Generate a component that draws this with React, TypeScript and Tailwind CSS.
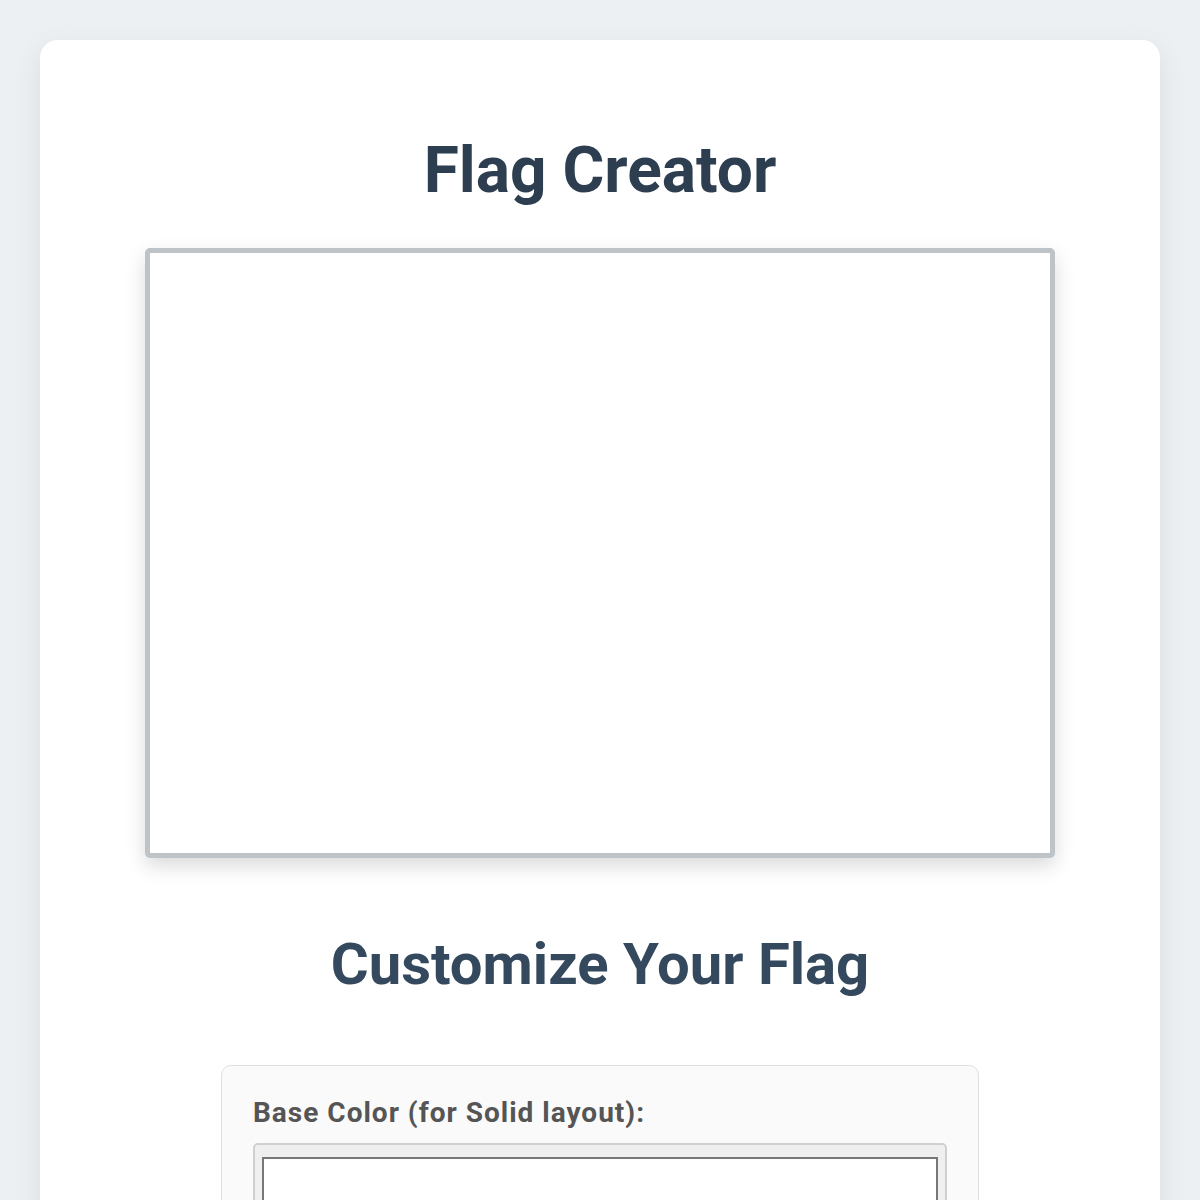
export default function App() {
  return (
    <div className="min-h-screen bg-[#ecf0f3] p-[40px] font-['Roboto',sans-serif]">
      <div className="flex flex-col items-center rounded-[18px] bg-white px-[40px] pt-[93px] pb-[60px] shadow-[0_10px_30px_rgba(0,0,0,0.08)]">
        <h1 className="text-[64px] font-bold leading-[75px] text-[#2c3e50]">Flag Creator</h1>

        <div className="mt-[40px] h-[610px] w-[910px] rounded-[5px] border-[5px] border-[#bdc3c7] bg-white shadow-[0_8px_20px_rgba(0,0,0,0.15)]" />

        <h2 className="mt-[72px] text-[58px] font-bold leading-[68px] text-[#34495e]">Customize Your Flag</h2>

        <div className="mt-[67px] w-[758px] rounded-[10px] border border-[#e0e0e0] bg-[#fafafa] px-[31px] pt-[31px] pb-[32px]">
          <label className="block text-[28px] font-bold leading-[32px] tracking-[1px] text-[#555]">
            Base Color (for Solid layout):
          </label>
          <div className="mt-[14px] rounded-[5px] border-2 border-[#d0d0d0] bg-[#efefef] px-[7px] py-[12px]">
            <div className="h-[60px] border-2 border-[#777] bg-white" />
          </div>
        </div>
      </div>
    </div>
  );
}
